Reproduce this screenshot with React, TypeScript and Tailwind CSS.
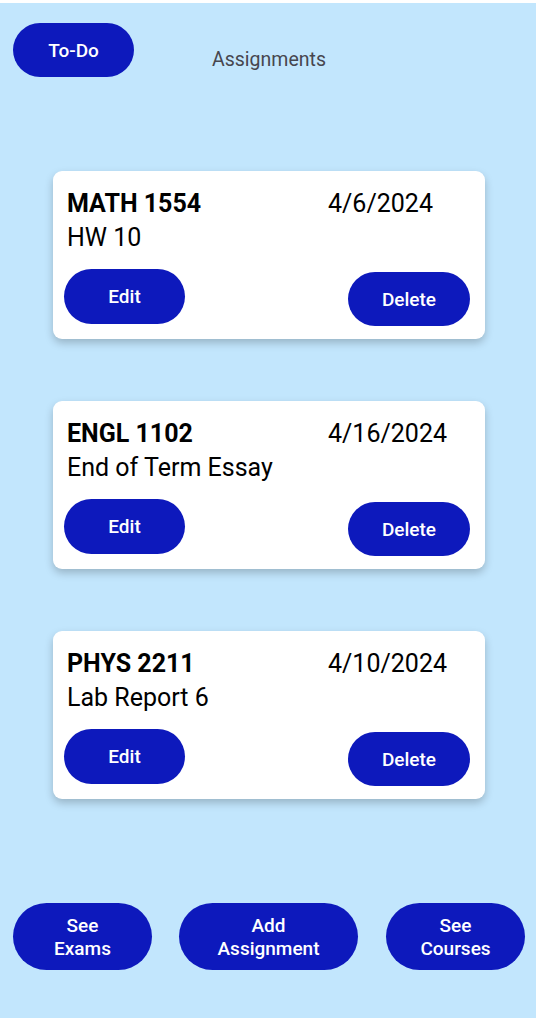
import React from 'react';

type Assignment = { course: string; due: string; title: string };

const ASSIGNMENTS: Assignment[] = [
  { course: 'MATH 1554', due: '4/6/2024', title: 'HW 10' },
  { course: 'ENGL 1102', due: '4/16/2024', title: 'End of Term Essay' },
  { course: 'PHYS 2211', due: '4/10/2024', title: 'Lab Report 6' },
];

const pill = 'flex items-center justify-center rounded-full bg-[#0d19bc] text-white font-medium text-[19px] leading-[23px] text-center';

function AssignmentCard({ course, due, title }: Assignment) {
  return (
    <div className="w-[432px] h-[168px] ml-[53px] bg-white rounded-[9px] shadow-[0_4px_9px_rgba(0,0,0,0.22)] pt-[16px]">
      <div className="flex pl-[14px] text-[25px] leading-[34px] text-black">
        <span className="w-[261px] font-bold">{course}</span>
        <span>{due}</span>
      </div>
      <div className="pl-[14px] text-[25px] leading-[34px] text-black">{title}</div>
      <div className="flex justify-between items-start pl-[11px] pr-[15px] mt-[14px]">
        <button className={`${pill} w-[121px] h-[55px]`}>Edit</button>
        <button className={`${pill} w-[122px] h-[54px] mt-[3px]`}>Delete</button>
      </div>
    </div>
  );
}

export default function App() {
  return (
    <div className="w-[536px] h-[1018px] bg-[#c2e6fd] border-t-[3px] border-white font-['Roboto',sans-serif] overflow-hidden">
      <header className="flex items-start pt-[20px] pl-[13px]">
        <button className={`${pill} w-[121px] h-[54px]`}>To-Do</button>
        <span className="ml-[78px] mt-[25px] text-[19.5px] leading-[23px] text-[#47464f]">Assignments</span>
      </header>
      <main className="flex flex-col gap-[62px] mt-[94px]">
        {ASSIGNMENTS.map((a) => (
          <AssignmentCard key={a.course} {...a} />
        ))}
      </main>
      <footer className="flex items-center mt-[104px] pl-[13px]">
        <button className={`${pill} w-[139px] h-[67px]`}>See<br />Exams</button>
        <button className={`${pill} w-[179px] h-[67px] ml-[27px]`}>Add<br />Assignment</button>
        <button className={`${pill} w-[139px] h-[67px] ml-[28px]`}>See<br />Courses</button>
      </footer>
    </div>
  );
}
